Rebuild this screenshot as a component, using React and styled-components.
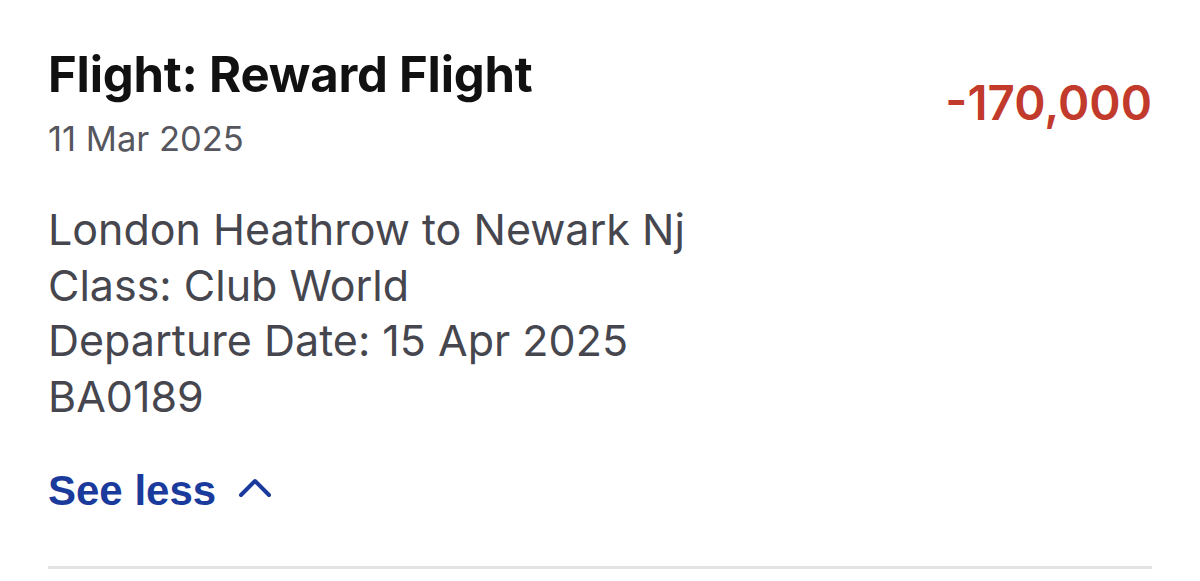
import React from "react";
import styled, { createGlobalStyle } from "styled-components";

const Global = createGlobalStyle`
  html, body {
    margin: 0;
    padding: 0;
    background: #ffffff;
  }
  body {
    font-family: Inter, "Noto Sans", sans-serif;
  }
`;

const Card = styled.div`
  width: 1104px;
  margin: 0 48px;
  padding-top: 47px;
  padding-bottom: 51px;
  border-bottom: 3px solid #e3e3e5;
`;

const Header = styled.div`
  display: flex;
  justify-content: space-between;
  align-items: flex-start;
`;

const Title = styled.h2`
  margin: 0;
  font-size: 49px;
  line-height: 56px;
  font-weight: 700;
  color: #111111;
  letter-spacing: -0.2px;
`;

const DateText = styled.div`
  margin-top: 15px;
  font-size: 34.5px;
  line-height: 42px;
  color: #56565e;
`;

const Amount = styled.div`
  margin-top: 30px;
  font-size: 47.5px;
  line-height: 52px;
  font-weight: 600;
  color: #c23a2b;
`;

const Details = styled.div`
  margin-top: 42px;
  display: flex;
  flex-direction: column;
`;

const Line = styled.div`
  font-size: 43px;
  line-height: 55.7px;
  color: #46464f;
`;

const Toggle = styled.button`
  margin-top: 42px;
  display: flex;
  align-items: center;
  gap: 21px;
  padding: 0;
  border: none;
  background: none;
  cursor: pointer;
  font-family: "Liberation Sans", Arial, sans-serif;
  font-weight: 700;
  font-size: 42px;
  line-height: 48px;
  color: #1a3b9c;

  svg {
    margin-bottom: 7px;
  }
`;

const Chevron = () => (
  <svg width="36" height="22" viewBox="0 0 36 22" fill="none">
    <path d="M4 19 L18 5 L32 19" stroke="#1a3b9c" strokeWidth="4" strokeLinecap="round" strokeLinejoin="round" />
  </svg>
);

export default function App() {
  return (
    <>
      <Global />
      <Card>
        <Header>
          <div>
            <Title>Flight: Reward Flight</Title>
            <DateText>11 Mar 2025</DateText>
          </div>
          <Amount>-170,000</Amount>
        </Header>
        <Details>
          <Line>London Heathrow to Newark Nj</Line>
          <Line>Class: Club World</Line>
          <Line>Departure Date: 15 Apr 2025</Line>
          <Line>BA0189</Line>
        </Details>
        <Toggle>
          See less
          <Chevron />
        </Toggle>
      </Card>
    </>
  );
}
